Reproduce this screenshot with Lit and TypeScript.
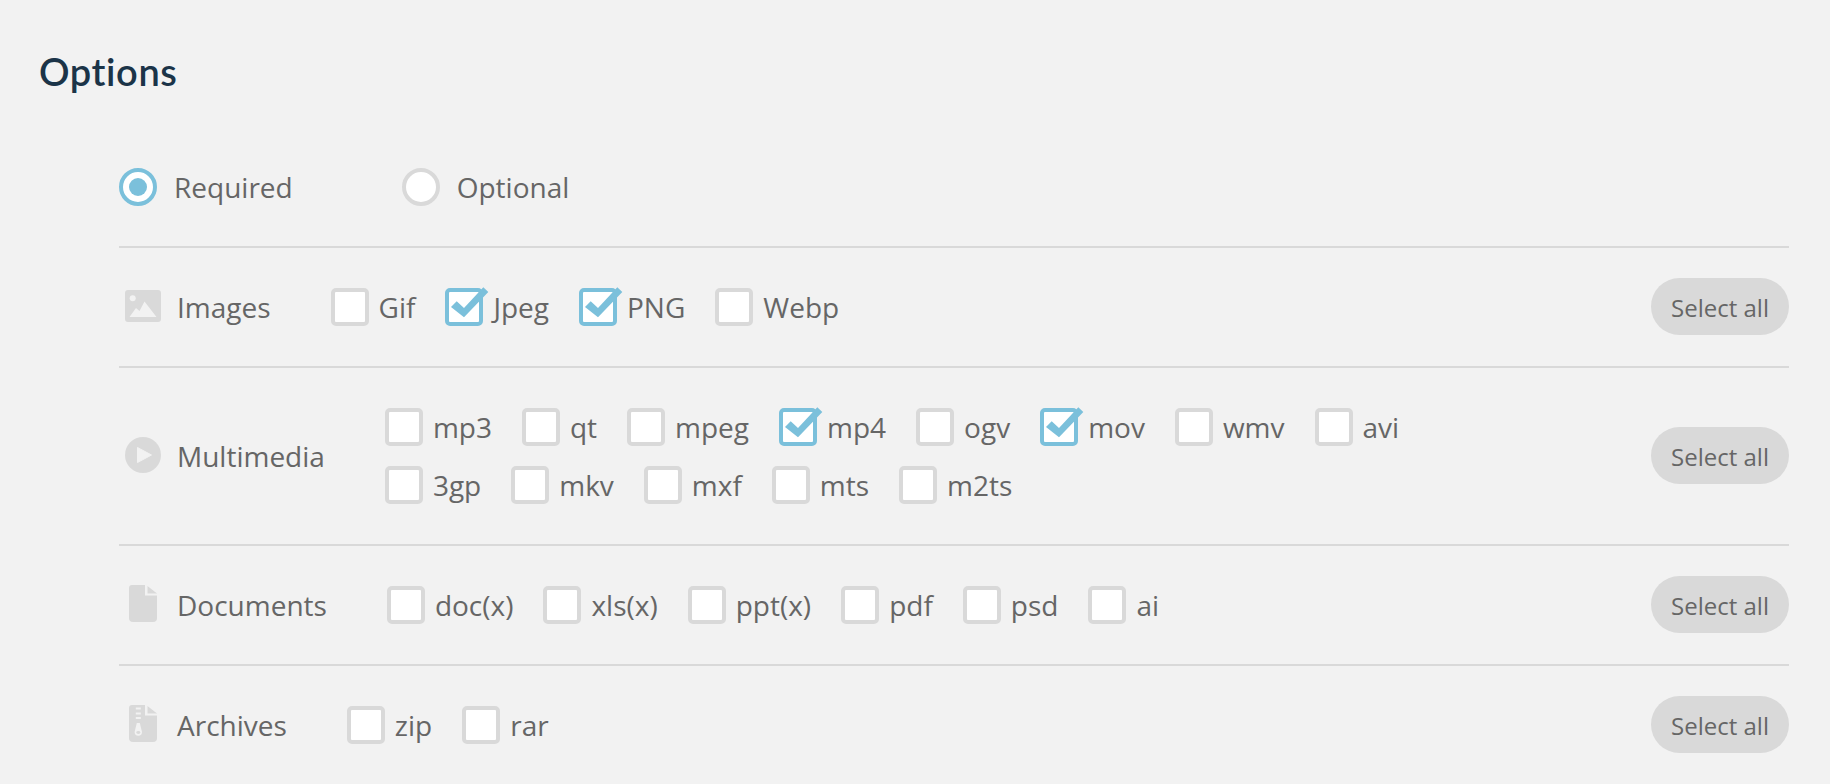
import { LitElement, html, css, svg } from 'lit'
import { customElement } from 'lit/decorators.js'
import { classMap } from 'lit/directives/class-map.js'

interface Option {
  label: string
  checked?: boolean
}

interface Group {
  label: string
  icon: unknown
  options: Option[]
}

const imageIcon = svg`
  <svg class="icon" width="36" height="32" viewBox="0 0 36 32">
    <rect width="36" height="32" rx="3" fill="#d9d9d9" />
    <circle cx="7.7" cy="8.3" r="3" fill="#f2f2f2" />
    <path d="M4.5 27 L11 18 L14.5 21 L19.5 11.5 L31.5 27 Z" fill="#f2f2f2" />
  </svg>`

const playIcon = svg`
  <svg class="icon" width="36" height="36" viewBox="0 0 36 36">
    <circle cx="18" cy="18" r="18" fill="#d9d9d9" />
    <path d="M12.5 10.5 L26.5 18 L12.5 25.5 Z" fill="#f2f2f2" stroke="#f2f2f2" stroke-width="1" stroke-linejoin="round" />
  </svg>`

const docIcon = svg`
  <svg class="icon" width="28" height="37" viewBox="0 0 28 37">
    <path d="M3 0 H16 V10.500 H28 V33 Q28 37 24 37 H4 Q0 37 0 33 V3 Q0 0 3 0 Z" fill="#d9d9d9" />
    <path d="M18.500 1 L28 8.500 H18.500 Z" fill="#d9d9d9" />
  </svg>`

const zipIcon = svg`
  <svg class="icon" width="28" height="37" viewBox="0 0 28 37">
    <path d="M3 0 H16 V10.500 H28 V33 Q28 37 24 37 H4 Q0 37 0 33 V3 Q0 0 3 0 Z" fill="#d9d9d9" />
    <path d="M18.500 1 L28 8.500 H18.500 Z" fill="#d9d9d9" />
    <path d="M6.800 2.500 H11.800 V4.500 H6.800 Z M6.800 7.500 H11.800 V9.500 H6.800 Z M6.800 12 H11.800 V14 H6.800 Z" fill="#f2f2f2" />
    <path d="M7.800 18 H10.800 L13 27 A3.700 3.700 0 1 1 5.600 27 Z" fill="#f2f2f2" />
    <ellipse cx="9.300" cy="27.500" rx="2" ry="1.400" fill="#d9d9d9" />
  </svg>`

const groups: Group[] = [
  {
    label: 'Images',
    icon: imageIcon,
    options: [
      { label: 'Gif' },
      { label: 'Jpeg', checked: true },
      { label: 'PNG', checked: true },
      { label: 'Webp' },
    ],
  },
  {
    label: 'Multimedia',
    icon: playIcon,
    options: [
      { label: 'mp3' },
      { label: 'qt' },
      { label: 'mpeg' },
      { label: 'mp4', checked: true },
      { label: 'ogv' },
      { label: 'mov', checked: true },
      { label: 'wmv' },
      { label: 'avi' },
      { label: '3gp' },
      { label: 'mkv' },
      { label: 'mxf' },
      { label: 'mts' },
      { label: 'm2ts' },
    ],
  },
  {
    label: 'Documents',
    icon: docIcon,
    options: [
      { label: 'doc(x)' },
      { label: 'xls(x)' },
      { label: 'ppt(x)' },
      { label: 'pdf' },
      { label: 'psd' },
      { label: 'ai' },
    ],
  },
  {
    label: 'Archives',
    icon: zipIcon,
    options: [{ label: 'zip' }, { label: 'rar' }],
  },
]

@customElement('app-root')
export class AppRoot extends LitElement {
  static styles = css`
    :host {
      display: block;
      height: 784px;
      overflow: hidden;
      box-sizing: border-box;
      background: #f2f2f2;
      font-family: 'Open Sans', sans-serif;
      font-size: 28px;
      color: #666;
    }
    h1 {
      margin: 0;
      padding: 48px 0 0 39px;
      height: 128px;
      box-sizing: border-box;
      font-family: Lato, sans-serif;
      font-size: 38px;
      line-height: 46px;
      font-weight: 600;
      letter-spacing: 0.6px;
      color: #1b3448;
    }
    .list {
      margin: 0 41px 0 119px;
    }
    .row {
      display: flex;
      align-items: center;
      min-height: 118px;
      border-bottom: 2px solid #d9d9d9;
    }
    .row:last-child {
      border-bottom: none;
    }
    .tall {
      min-height: 176px;
    }
    .radio {
      display: flex;
      align-items: center;
      gap: 17px;
      margin-right: 109px;
    }
    .radio-dot {
      width: 38px;
      height: 38px;
      box-sizing: border-box;
      border: 4px solid #d9d9d9;
      border-radius: 50%;
      background: #fff;
      display: grid;
      place-items: center;
    }
    .radio-dot.on {
      border-color: #7bc0db;
    }
    .radio-dot.on::after {
      content: '';
      width: 18px;
      height: 18px;
      border-radius: 50%;
      background: #7bc0db;
    }
    .head {
      display: flex;
      align-items: center;
      margin-right: 60px;
    }
    .icon-slot {
      width: 48px;
      margin-right: 10px;
      display: flex;
      justify-content: center;
      margin-bottom: 3px;
    }
    .icon {
      display: block;
    }
    .options {
      display: flex;
      flex-wrap: wrap;
      column-gap: 30px;
      row-gap: 20px;
      max-width: 1030px;
    }
    .option {
      display: flex;
      align-items: center;
      gap: 10px;
      height: 38px;
    }
    .box {
      position: relative;
      width: 38px;
      height: 38px;
      box-sizing: border-box;
      border: 4px solid #d9d9d9;
      border-radius: 5px;
      background: #fff;
    }
    .box.on {
      border-color: #7bc0db;
    }
    .tick {
      position: absolute;
      left: -4px;
      top: -4px;
      overflow: visible;
    }
    button {
      margin: 0 0 1px auto;
      width: 138px;
      height: 57px;
      border: none;
      border-radius: 29px;
      background: #d9d9d9;
      color: #666;
      font-family: inherit;
      font-size: 24px;
      padding: 2px 0 0;
    }
  `

  private renderOption(option: Option) {
    return html`
      <div class="option">
        <span class=${classMap({ box: true, on: !!option.checked })}>
          ${option.checked
            ? html`<svg class="tick" width="38" height="38" viewBox="0 0 38 38">
                <path d="M6 19 L11.700 13.300 L19 20 L38.300 -0.700 L43.300 4 L19 29.300 Z" fill="#7bc0db" />
              </svg>`
            : ''}
        </span>
        <span>${option.label}</span>
      </div>
    `
  }

  render() {
    return html`
      <h1>Options</h1>
      <div class="list">
        <div class="row">
          <div class="radio"><span class="radio-dot on"></span><span>Required</span></div>
          <div class="radio"><span class="radio-dot"></span><span>Optional</span></div>
        </div>
        ${groups.map(
          (group) => html`
            <div class=${classMap({ row: true, tall: group.options.length > 8 })}>
              <div class="head">
                <span class="icon-slot">${group.icon}</span>
                <span>${group.label}</span>
              </div>
              <div class="options">${group.options.map((o) => this.renderOption(o))}</div>
              <button>Select all</button>
            </div>
          `
        )}
      </div>
    `
  }
}
